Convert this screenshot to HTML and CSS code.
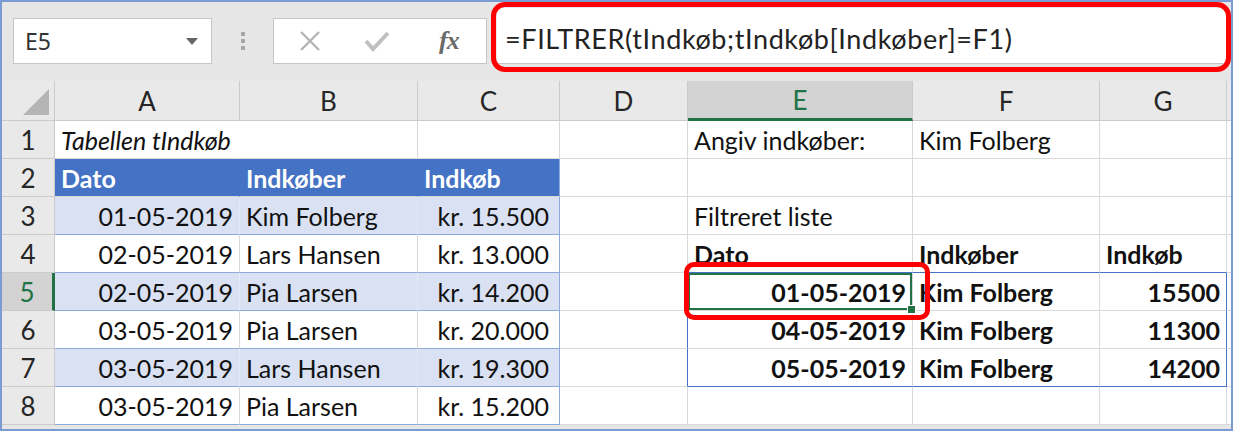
FILE: index.html
```html
<!DOCTYPE html>
<html lang="da">
  <head>
    <meta charset="UTF-8" />
    <title>FILTRER eksempel</title>
    <link rel="stylesheet" href="styles.css">
  </head>
  <body>
    <div class="screen">
      <!-- formellinje -->
      <div class="toolbar">
        <div class="name-box">
          <span>E5</span>
          <svg class="caret" width="12" height="7" viewBox="0 0 12 7"><polygon points="0,0 12,0 6,7" /></svg>
        </div>
        <div class="grip"><i></i><i></i><i></i></div>
        <div class="fx-buttons">
          <svg class="btn-cancel" width="22" height="22" viewBox="0 0 22 22"><path d="M2 2 L20 20 M20 2 L2 20" /></svg>
          <svg class="btn-enter" width="26" height="22" viewBox="0 0 26 22"><path d="M2 11 L9 19 L24 3" /></svg>
          <span class="btn-fx">fx</span>
        </div>
        <div class="formula">=FILTRER(tIndkøb;tIndkøb[Indkøber]=F1)</div>
      </div>

      <!-- regneark -->
      <div class="sheet">
        <div class="head corner">
          <svg width="26" height="26" viewBox="0 0 26 26"><polygon points="26,0 26,26 0,26" /></svg>
        </div>
        <div class="head">A</div>
        <div class="head">B</div>
        <div class="head">C</div>
        <div class="head">D</div>
        <div class="head sel-col">E</div>
        <div class="head">F</div>
        <div class="head">G</div>
        <div class="head"></div>

        <div class="head rh">1</div>
        <div class="cell title no-right">Tabellen tIndkøb</div>
        <div class="cell"></div>
        <div class="cell"></div>
        <div class="cell"></div>
        <div class="cell">Angiv indkøber:</div>
        <div class="cell">Kim Folberg</div>
        <div class="cell"></div>
        <div class="cell"></div>

        <div class="head rh">2</div>
        <div class="cell thead">Dato</div>
        <div class="cell thead">Indkøber</div>
        <div class="cell thead t-end">Indkøb</div>
        <div class="cell"></div>
        <div class="cell"></div>
        <div class="cell"></div>
        <div class="cell"></div>
        <div class="cell"></div>

        <div class="head rh">3</div>
        <div class="cell trow band num">01-05-2019</div>
        <div class="cell trow band">Kim Folberg</div>
        <div class="cell trow band t-end num kr">kr. 15.500</div>
        <div class="cell"></div>
        <div class="cell">Filtreret liste</div>
        <div class="cell"></div>
        <div class="cell"></div>
        <div class="cell"></div>

        <div class="head rh">4</div>
        <div class="cell trow num">02-05-2019</div>
        <div class="cell trow">Lars Hansen</div>
        <div class="cell trow t-end num kr">kr. 13.000</div>
        <div class="cell"></div>
        <div class="cell bold spill-top">Dato</div>
        <div class="cell bold spill-top">Indkøber</div>
        <div class="cell bold spill-top">Indkøb</div>
        <div class="cell"></div>

        <div class="head rh sel-row">5</div>
        <div class="cell trow band num">02-05-2019</div>
        <div class="cell trow band">Pia Larsen</div>
        <div class="cell trow band t-end num kr">kr. 14.200</div>
        <div class="cell spill-left"></div>
        <div class="cell bold num active">01-05-2019</div>
        <div class="cell bold">Kim Folberg</div>
        <div class="cell bold num spill-right">15500</div>
        <div class="cell"></div>

        <div class="head rh">6</div>
        <div class="cell trow num">03-05-2019</div>
        <div class="cell trow">Pia Larsen</div>
        <div class="cell trow t-end num kr">kr. 20.000</div>
        <div class="cell spill-left"></div>
        <div class="cell bold num">04-05-2019</div>
        <div class="cell bold">Kim Folberg</div>
        <div class="cell bold num spill-right">11300</div>
        <div class="cell"></div>

        <div class="head rh">7</div>
        <div class="cell trow band num">03-05-2019</div>
        <div class="cell trow band">Lars Hansen</div>
        <div class="cell trow band t-end num kr">kr. 19.300</div>
        <div class="cell spill-left"></div>
        <div class="cell bold num spill-bottom">05-05-2019</div>
        <div class="cell bold spill-bottom">Kim Folberg</div>
        <div class="cell bold num spill-right spill-bottom">14200</div>
        <div class="cell"></div>

        <div class="head rh">8</div>
        <div class="cell trow num">03-05-2019</div>
        <div class="cell trow">Pia Larsen</div>
        <div class="cell trow t-end num kr">kr. 15.200</div>
        <div class="cell"></div>
        <div class="cell"></div>
        <div class="cell"></div>
        <div class="cell"></div>
        <div class="cell"></div>
      </div>

      <!-- røde markeringer -->
      <div class="callout callout-formula"></div>
      <div class="callout callout-cell"></div>
    </div>
  </body>
</html>
```

FILE: styles.css
```css
body {
  margin: 0;
  padding: 0;
  background-color: #fff;
  font-family: Lato, "Open Sans", sans-serif;
}

.screen {
  position: relative;
  width: 1233px;
  height: 431px;
  box-sizing: border-box;
  border: 2px solid #7b9bd3;
  background-color: #e6e6e6;
  overflow: hidden;
}

/* formellinje */
.toolbar {
  display: flex;
  align-items: flex-end;
  height: 79px;
  box-sizing: border-box;
  padding: 0 2px 17px 11px;
}

.name-box {
  display: flex;
  align-items: center;
  justify-content: space-between;
  width: 199px;
  height: 46px;
  box-sizing: border-box;
  padding: 0 13px 0 11px;
  background-color: #fff;
  border: 1px solid #c6c6c6;
  font-family: "Noto Sans", sans-serif;
  font-size: 23px;
  color: #333;
}

.caret polygon {
  fill: #666;
}

.grip {
  display: flex;
  flex-direction: column;
  align-items: center;
  justify-content: center;
  gap: 3px;
  width: 61px;
  height: 46px;
}

.grip i {
  display: block;
  width: 4px;
  height: 4px;
  background-color: #a6a6a6;
}

.fx-buttons {
  display: flex;
  align-items: center;
  width: 214px;
  height: 46px;
  box-sizing: border-box;
  padding-left: 25px;
  background-color: #fff;
  border: 1px solid #c6c6c6;
}

.fx-buttons path {
  fill: none;
  stroke: #b4b4b4;
  stroke-width: 2.4;
}

.btn-enter {
  margin-left: 43px;
}

.btn-enter path {
  stroke-width: 4;
  stroke: #c0c0c0;
}

.btn-fx {
  margin-left: 49px;
  font-family: "Liberation Serif", serif;
  font-style: italic;
  font-weight: bold;
  font-size: 26px;
  color: #6a6a6a;
  letter-spacing: -1px;
}

.formula {
  flex: 1;
  display: flex;
  align-items: center;
  height: 56px;
  box-sizing: border-box;
  margin-left: 10px;
  padding: 6px 0 0 8px;
  background-color: #fff;
  border-bottom: 1px solid #c6c6c6;
  font-size: 27px;
  letter-spacing: 0.6px;
  color: #222;
  white-space: nowrap;
}

/* regneark */
.sheet {
  display: grid;
  grid-template-columns: 53px 185px 178px 142px 128px 225px 187px 127px 1fr;
  grid-template-rows: 40px repeat(8, 38px);
  background-color: #fff;
  font-size: 25px;
  color: #111;
}

.head {
  display: flex;
  align-items: center;
  justify-content: center;
  background-color: #e9e9e9;
  border-right: 1px solid #cbcbcb;
  border-bottom: 1px solid #cbcbcb;
  color: #262626;
  font-size: 26px;
}

.corner {
  justify-content: flex-end;
  align-items: flex-end;
  padding: 0 5px 5px 0;
}

.corner polygon {
  fill: #b5b5b5;
}

.sel-col {
  background-color: #d3d3d3;
  color: #217346;
  border-bottom: 3px solid #217346;
}

.sel-row {
  background-color: #d3d3d3;
  color: #217346;
  border-right: 3px solid #217346;
}

.cell {
  display: flex;
  align-items: center;
  padding: 0 6px;
  border-right: 1px solid #d9d9d9;
  border-bottom: 1px solid #d9d9d9;
  white-space: nowrap;
  min-width: 0;
}

.num {
  justify-content: flex-end;
}

.kr {
  padding-right: 10px;
}

.bold {
  font-weight: bold;
}

.title {
  font-style: italic;
}

.no-right {
  border-right-color: transparent;
}

/* tabellen tIndkøb */
.thead {
  background-color: #4472c4;
  color: #fff;
  font-weight: bold;
  border-right-color: #4472c4;
}

.trow {
  border-bottom-color: #8ea9db;
}

.band {
  background-color: #d9e1f2;
  border-right-color: #e3e9f5;
}

.t-end {
  border-right-color: #8ea9db;
}

/* spill-område */
.spill-top {
  border-bottom-color: #4472c4;
}

.spill-left {
  border-right-color: #4472c4;
}

.spill-right {
  border-right-color: #4472c4;
}

.spill-bottom {
  border-bottom-color: #4472c4;
}

.active {
  position: relative;
  box-shadow: inset 0 0 0 2px #217346;
}

.active::after {
  content: "";
  position: absolute;
  right: -4px;
  bottom: -4px;
  width: 7px;
  height: 7px;
  background-color: #217346;
  border: 1px solid #fff;
}

.callout {
  position: absolute;
  box-sizing: border-box;
  border: 5px solid #ff0000;
}

.callout-formula {
  left: 489px;
  top: 0;
  width: 740px;
  height: 70px;
  border-radius: 14px;
}

.callout-cell {
  left: 682px;
  top: 260px;
  width: 246px;
  height: 58px;
  border-radius: 10px;
}
```
